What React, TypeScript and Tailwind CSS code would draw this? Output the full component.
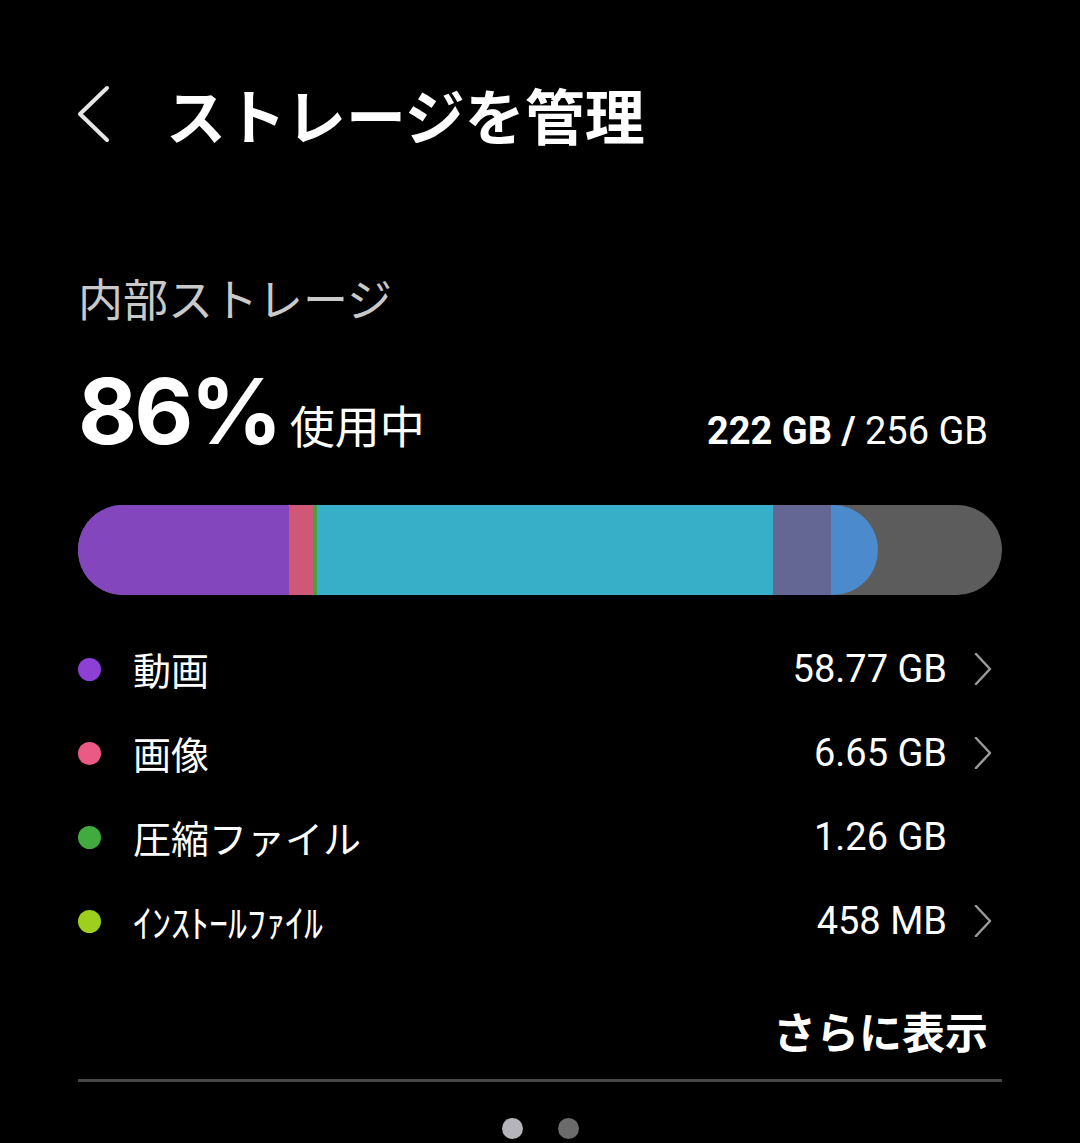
import React from 'react';

interface Category {
  label: string;
  value: string;
  dot: string;
  arrow: boolean;
}

const categories: Category[] = [
  { label: "動画", value: "58.77 GB", dot: "bg-[#8e40d6]", arrow: true },
  { label: "画像", value: "6.65 GB", dot: "bg-[#ea5a85]", arrow: true },
  { label: "圧縮ファイル", value: "1.26 GB", dot: "bg-[#41ab3f]", arrow: false },
  { label: "ｲﾝｽﾄｰﾙﾌｧｲﾙ", value: "458 MB", dot: "bg-[#9ccf1e]", arrow: true }
];

// segments of the usage bar, px out of 924
const segments = [
  "w-[211px] bg-[#8346bd]",
  "w-[24px] bg-[#cf5878]",
  "w-[4px] bg-[#4aa03c]",
  "w-[456px] bg-[#38afc9]",
  "w-[58px] bg-[#646793]",
  "w-[47px] bg-[#4a8acd]"
];

export default function App() {
  return (
    <div className="w-[1080px] h-[1143px] bg-black overflow-hidden text-white font-['Noto_Sans_CJK_JP',sans-serif]">
      <header className="flex items-center h-[115px] mt-[56px] pl-[76px]">
        <svg width="36" height="60" viewBox="0 0 36 60" fill="none">
          <path d="M31 4 L4 30 L31 56" stroke="#e6e6e6" strokeWidth="4" strokeLinecap="round" strokeLinejoin="round" />
        </svg>
        <h1 className="ml-[54px] text-[60px] font-bold leading-none">ストレージを管理</h1>
      </header>

      <section className="px-[78px]">
        <p className="mt-[104px] text-[45px] leading-none text-[#c9c9c9]">内部ストレージ</p>

        <div className="mt-[46px] flex items-baseline justify-between pr-[14px]">
          <div className="flex items-baseline">
            <span className="font-['Inter',sans-serif] font-bold text-[91px] leading-none tracking-[-3px]">86%</span>
            <span className="ml-[10px] text-[45px] leading-none">使用中</span>
          </div>
          <div className="font-['Roboto',sans-serif] text-[38px] leading-none">
            <span className="font-bold">222 GB /</span> 256 GB
          </div>
        </div>

        <div className="mt-[48px] h-[90px] rounded-full bg-[#5c5c5c] overflow-hidden flex">
          <div className="flex w-[800px] h-full rounded-r-full overflow-hidden">
            {segments.map((s, i) => (
              <div key={i} className={`${s} h-full shrink-0`} />
            ))}
          </div>
        </div>

        <ul className="mt-[32px]">
          {categories.map((c, i) => (
            <li key={i} className="flex items-center h-[84px]">
              <span className={`w-[23px] h-[23px] rounded-full ${c.dot}`} />
              <span className="ml-[32px] flex-1 text-[38px] leading-none">{c.label}</span>
              <span className="font-['Roboto',sans-serif] text-[38px] leading-none">{c.value}</span>
              <span className="w-[55px] pl-[27px] flex items-center">
                {c.arrow && (
                  <svg width="18" height="32" viewBox="0 0 18 32" fill="none">
                    <path d="M2 1 L16 16 L2 31" stroke="#9a9a9a" strokeWidth="2.5" strokeLinecap="round" strokeLinejoin="round" />
                  </svg>
                )}
              </span>
            </li>
          ))}
        </ul>

        <div className="mt-[46px] flex justify-end pr-[14px]">
          <span className="text-[43px] font-bold leading-none">さらに表示</span>
        </div>

        <div className="mt-[27px] h-[3px] bg-[#474747]" />

        <div className="mt-[36px] flex justify-center gap-[35px]">
          <span className="w-[21px] h-[21px] rounded-full bg-[#b4b4ba]" />
          <span className="w-[21px] h-[21px] rounded-full bg-[#6b6b6b]" />
        </div>
      </section>
    </div>
  );
}
